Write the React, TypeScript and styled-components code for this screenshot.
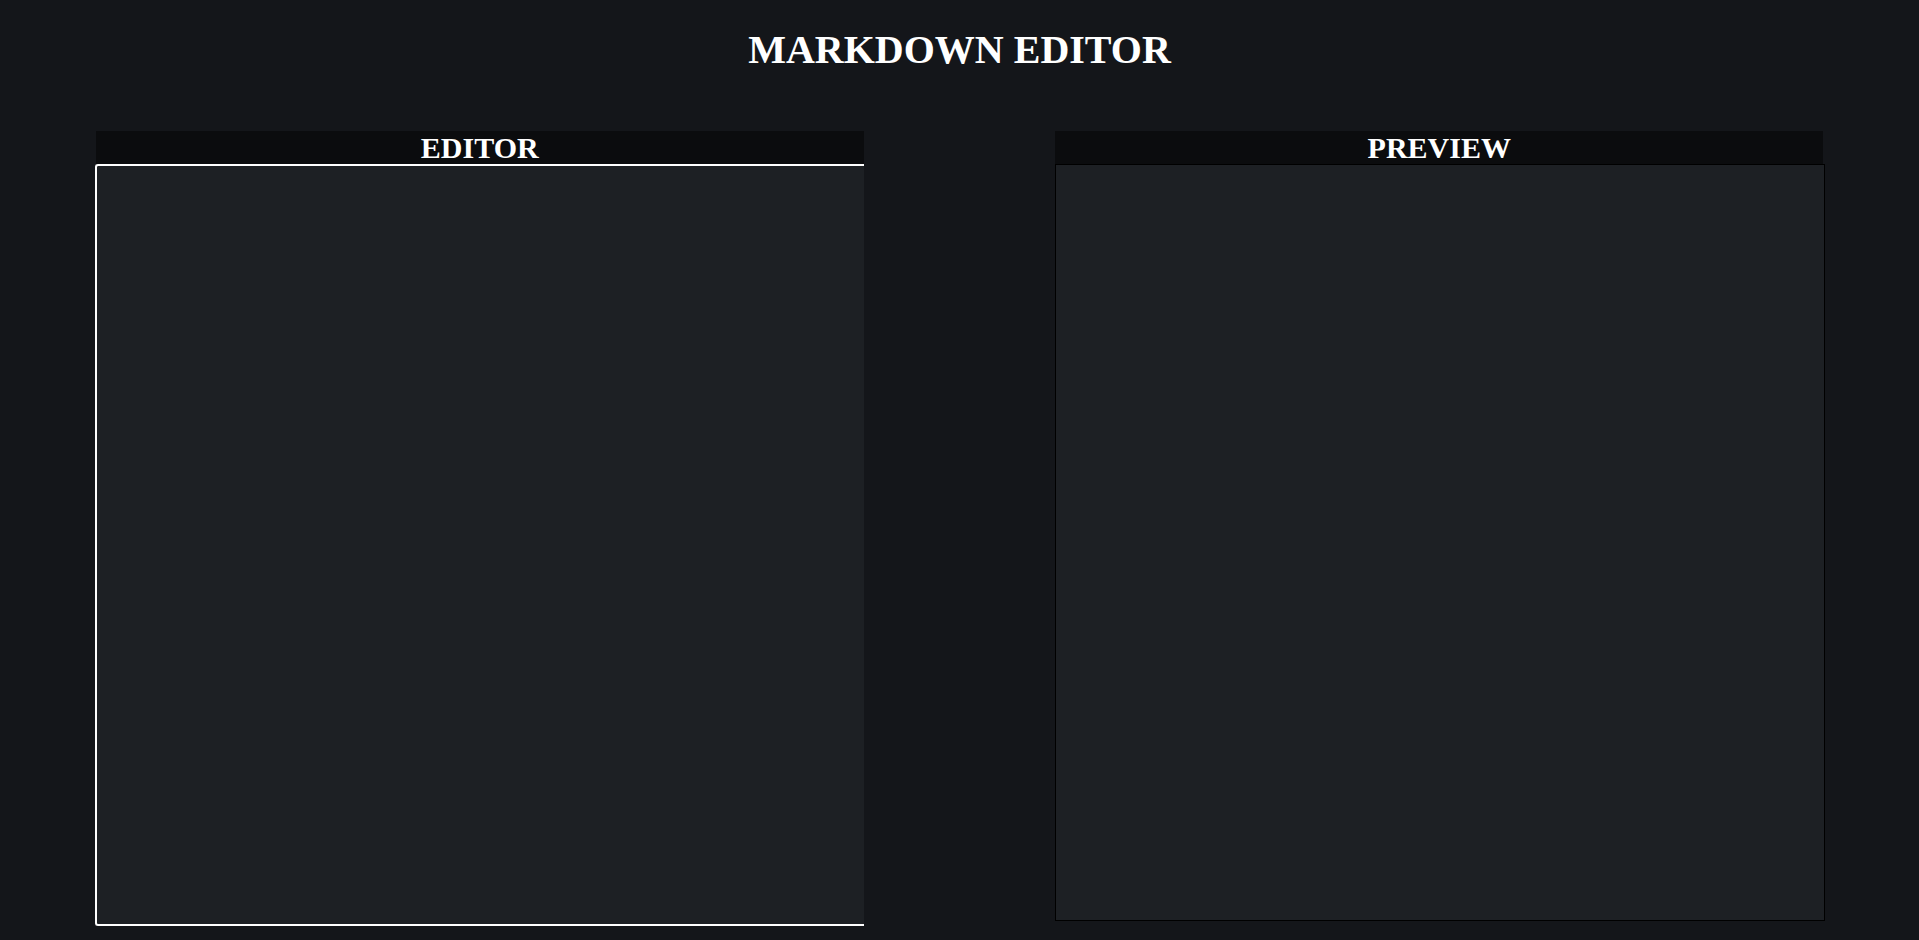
import React, { useState } from "react";
import styled, { createGlobalStyle } from "styled-components";

const GlobalStyle = createGlobalStyle`
  html, body {
    margin: 0;
    padding: 0;
    background: #14161a;
    color: #ffffff;
    font-family: "Liberation Serif", "Times New Roman", serif;
  }
`;

const Page = styled.div`
  min-height: 940px;
  display: flex;
  flex-direction: column;
`;

const Title = styled.h1`
  font-size: 40px;
  font-weight: bold;
  text-align: center;
  margin: 26px 0;
  line-height: normal;
`;

const Columns = styled.div`
  display: flex;
  flex-direction: row;
  justify-content: space-around;
  align-items: flex-start;
  margin-top: 32px;
`;

const Panel = styled.section`
  width: 40%;
  display: flex;
  flex-direction: column;
`;

const PanelHeader = styled.h2`
  margin: 0;
  background: #0b0c0e;
  font-size: 30px;
  font-weight: bold;
  text-align: center;
  line-height: 33px;
`;

const EditorArea = styled.textarea`
  box-sizing: border-box;
  width: calc(100% + 1px);
  margin-left: -1px;
  height: 762px;
  background: #1d2024;
  color: #ffffff;
  border: 2px solid #ffffff;
  border-right: none;
  border-radius: 3px 0 0 3px;
  resize: none;
  outline: none;
  padding: 4px;
  font-family: "Liberation Mono", monospace;
  font-size: 14px;
`;

const PreviewBox = styled.div`
  box-sizing: content-box;
  width: 100%;
  height: 755px;
  background: #1d2024;
  border: 1px solid #000000;
`;

const App: React.FC = () => {
  const [text, setText] = useState<string>("");
  return (
    <Page>
      <GlobalStyle />
      <Title>MARKDOWN EDITOR</Title>
      <Columns>
        <Panel>
          <PanelHeader>EDITOR</PanelHeader>
          <EditorArea value={text} onChange={(e) => setText(e.target.value)} />
        </Panel>
        <Panel>
          <PanelHeader>PREVIEW</PanelHeader>
          <PreviewBox>{text}</PreviewBox>
        </Panel>
      </Columns>
    </Page>
  );
};

export default App;
